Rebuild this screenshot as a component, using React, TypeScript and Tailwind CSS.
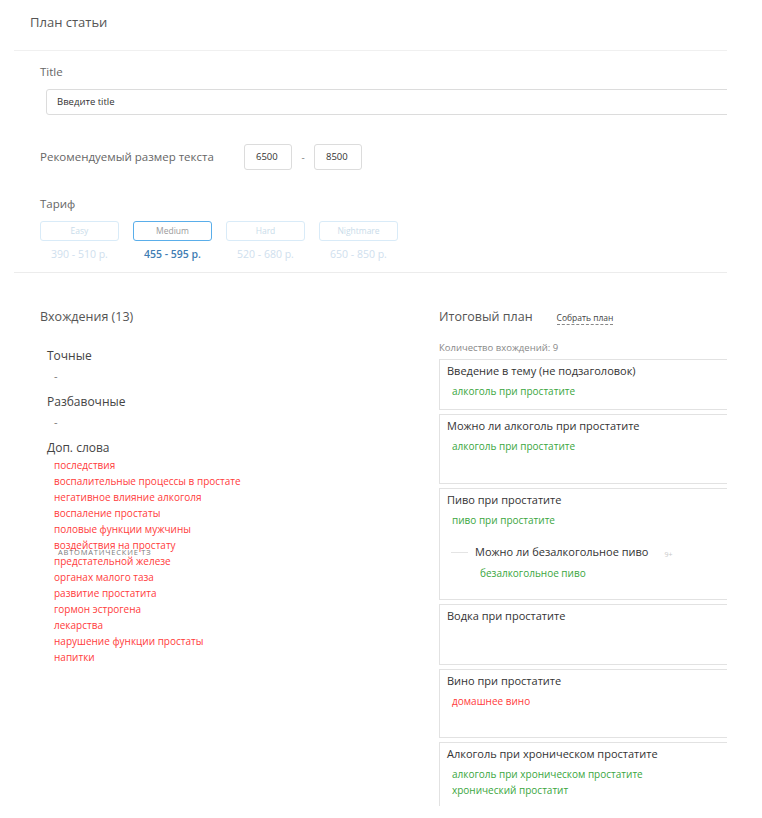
import React from 'react'

const FONT = { fontFamily: '"Open Sans", "Noto Sans", Arial, sans-serif' }

const extraWords = [
  'последствия',
  'воспалительные процессы в простате',
  'негативное влияние алкоголя',
  'воспаление простаты',
  'половые функции мужчины',
  'воздействия на простату',
  'предстательной железе',
  'органах малого таза',
  'развитие простатита',
  'гормон эстрогена',
  'лекарства',
  'нарушение функции простаты',
  'напитки',
]

const tariffs = [
  { name: 'Easy', price: '390 - 510 р.', active: false },
  { name: 'Medium', price: '455 - 595 р.', active: true },
  { name: 'Hard', price: '520 - 680 р.', active: false },
  { name: 'Nightmare', price: '650 - 850 р.', active: false },
]

type Kw = { text: string; bad?: boolean }
type Section = { title: string; h: string; keys: Kw[]; sub?: { title: string; keys: Kw[] } }

const plan: Section[] = [
  { title: 'Введение в тему (не подзаголовок)', h: 'h-[51px]', keys: [{ text: 'алкоголь при простатите' }] },
  { title: 'Можно ли алкоголь при простатите', h: 'h-[70px]', keys: [{ text: 'алкоголь при простатите' }] },
  {
    title: 'Пиво при простатите', h: 'h-[112px]', keys: [{ text: 'пиво при простатите' }],
    sub: { title: 'Можно ли безалкогольное пиво', keys: [{ text: 'безалкогольное пиво' }] },
  },
  { title: 'Водка при простатите', h: 'h-[61px]', keys: [] },
  { title: 'Вино при простатите', h: 'h-[69px]', keys: [{ text: 'домашнее вино', bad: true }] },
  {
    title: 'Алкоголь при хроническом простатите', h: 'h-[110px]',
    keys: [{ text: 'алкоголь при хроническом простатите' }, { text: 'хронический простатит' }],
  },
]

function Keys({ keys, className }: { keys: Kw[]; className: string }) {
  if (!keys.length) return null
  return (
    <div className={className}>
      {keys.map((k) => (
        <div key={k.text} className={`text-[10px] leading-[16px] ${k.bad ? 'text-[#ff3b3b]' : 'text-[#3aa640]'}`}>
          {k.text}
        </div>
      ))}
    </div>
  )
}

function PlanCard({ s }: { s: Section }) {
  return (
    <div className={`w-[310px] shrink-0 border border-[#e2e2e2] bg-white pl-[7px] pt-[3px] ${s.h}`}>
      <div className="text-[11px] leading-[16px] text-[#333]">{s.title}</div>
      <Keys keys={s.keys} className="pl-[5px] pt-[4px]" />
      {s.sub && (
        <div className="mt-[16px]">
          <div className="flex items-center">
            <div className="ml-[4px] h-px w-[17px] bg-[#e4e4e4]" />
            <div className="ml-[7px] text-[11px] leading-[16px] text-[#333]">{s.sub.title}</div>
            <div className="ml-[16px] mt-[6px] text-[7px] text-[#c8c8c8]">9+</div>
          </div>
          <Keys keys={s.sub.keys} className="pl-[33px] pt-[4px]" />
        </div>
      )}
    </div>
  )
}

export default function App() {
  return (
    <div className="w-[762px] h-[818px] bg-white" style={FONT}>
      <div className="w-[727px] h-[806px] overflow-hidden">
        <div className="pl-[30px] pt-[12px] h-[50px] text-[13px] leading-[20px] text-[#555]">План статьи</div>
        <div className="ml-[14px] border-t border-[#f0f0f0]" />

        <div className="pl-[40px]">
          <div className="mt-[13px] text-[11.5px] leading-[16px] text-[#666]">Title</div>
          <div className="ml-[6px] mt-[9px] flex h-[26px] w-[700px] items-center rounded-[3px] border border-[#dcdcdc] pl-[10px] text-[9.5px] text-[#333]">
            Введите title
          </div>

          <div className="mt-[29px] flex h-[26px] items-center">
            <div className="w-[204px] text-[11.5px] text-[#666]">Рекомендуемый размер текста</div>
            <div className="flex h-[26px] w-[48px] items-center rounded-[3px] border border-[#dcdcdc] pl-[11px] text-[9.5px] text-[#333]">6500</div>
            <div className="w-[22px] text-center text-[10px] text-[#888]">-</div>
            <div className="flex h-[26px] w-[48px] items-center rounded-[3px] border border-[#dcdcdc] pl-[11px] text-[9.5px] text-[#333]">8500</div>
          </div>

          <div className="mt-[26px] text-[11.5px] leading-[16px] text-[#666]">Тариф</div>
          <div className="mt-[9px] flex gap-[14px]">
            {tariffs.map((t) => (
              <div key={t.name} className="flex w-[79px] flex-col items-center">
                <div
                  className={`flex h-[20px] w-full items-center justify-center rounded-[3px] text-[8.5px] ${
                    t.active ? 'border-[1.5px] border-[#5aaeea] text-[#9a9a9a]' : 'border border-[#d9ebf8] text-[#c9dcea]'
                  }`}
                >
                  {t.name}
                </div>
                <div className={`mt-[5px] text-[10.5px] leading-[16px] ${t.active ? 'font-semibold text-[#3f7db3]' : 'text-[#cfe0ee]'}`}>
                  {t.price}
                </div>
              </div>
            ))}
          </div>
        </div>

        <div className="ml-[14px] mt-[10px] border-t border-[#ececec]" />

        <div className="flex pt-[35px]">
          <div className="relative w-[399px] shrink-0 pl-[40px]">
            <div className="text-[12.5px] leading-[18px] text-[#555]">Вхождения (13)</div>
            <div className="pl-[7px] pt-[21px]">
              <div className="text-[12px] leading-[18px] font-medium text-[#444]">Точные</div>
              <div className="pl-[7px] text-[11px] leading-[22px] text-[#777]">-</div>
              <div className="mt-[6px] text-[12px] leading-[18px] font-medium text-[#444]">Разбавочные</div>
              <div className="pl-[7px] text-[11px] leading-[22px] text-[#777]">-</div>
              <div className="mt-[6px] text-[12px] leading-[18px] font-medium text-[#444]">Доп. слова</div>
              <div className="pl-[7px]">
                {extraWords.map((w) => (
                  <div key={w} className="text-[10px] leading-[16px] text-[#ff3b3b]">{w}</div>
                ))}
              </div>
            </div>
            {/* floating section label from the side panel */}
            <div className="pointer-events-none absolute left-[58px] top-[240px] text-[7.5px] leading-[9px] tracking-[0.8px] text-[#7c7c7c]">
              АВТОМАТИЧЕСКИЕ ТЗ
            </div>
          </div>

          <div className="shrink-0 pl-[40px]">
            <div className="flex items-baseline">
              <div className="text-[12.5px] leading-[18px] text-[#555]">Итоговый план</div>
              <div className="ml-[24px] border-b border-dashed border-[#888] text-[8.5px] leading-[12px] text-[#444]">Собрать план</div>
            </div>
            <div className="mt-[16px] text-[9.5px] leading-[12px] text-[#888]">Количество вхождений: 9</div>
            <div className="mt-[5px] flex flex-col gap-[4px]">
              {plan.map((s) => (
                <PlanCard key={s.title} s={s} />
              ))}
            </div>
          </div>
        </div>
      </div>
    </div>
  )
}
